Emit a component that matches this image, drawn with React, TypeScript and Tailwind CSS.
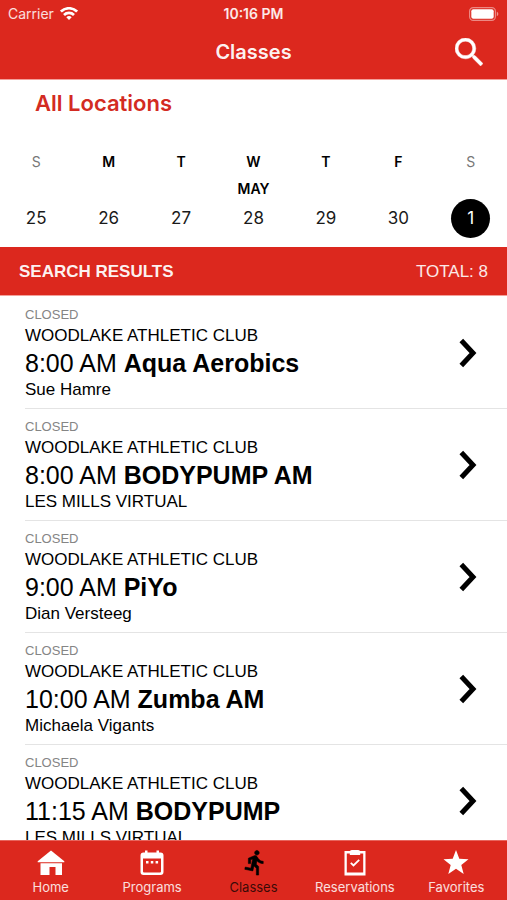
import type { ReactNode } from "react";

type Day = { letter: string; date: number; month?: string; weekend?: boolean; selected?: boolean };

const days: Day[] = [
  { letter: "S", date: 25, weekend: true },
  { letter: "M", date: 26 },
  { letter: "T", date: 27 },
  { letter: "W", date: 28, month: "MAY" },
  { letter: "T", date: 29 },
  { letter: "F", date: 30 },
  { letter: "S", date: 1, weekend: true, selected: true },
];

const club = "WOODLAKE ATHLETIC CLUB";

const classes = [
  { time: "8:00 AM", name: "Aqua Aerobics", teacher: "Sue Hamre" },
  { time: "8:00 AM", name: "BODYPUMP AM", teacher: "LES MILLS VIRTUAL" },
  { time: "9:00 AM", name: "PiYo", teacher: "Dian Versteeg" },
  { time: "10:00 AM", name: "Zumba AM", teacher: "Michaela Vigants" },
  { time: "11:15 AM", name: "BODYPUMP", teacher: "LES MILLS VIRTUAL" },
];

function Wifi() {
  return (
    <svg viewBox="0 0 18 13" className="h-[13px] w-[18px]" fill="none" stroke="white" strokeWidth="2.7" aria-hidden="true">
      <path d="M.9 4.600a11.500 11.500 0 0 1 16.200 0" />
      <path d="M4 8a7.100 7.100 0 0 1 10 0" />
      <path d="M9 13 6.300 10.300a3.900 3.900 0 0 1 5.400 0z" fill="white" stroke="none" />
    </svg>
  );
}

function Battery() {
  return (
    <svg viewBox="0 0 30 14" className="h-[14px] w-[30px]" aria-hidden="true">
      <rect x=".6" y=".6" width="25.8" height="12.8" rx="3.6" fill="none" stroke="white" strokeOpacity=".45" strokeWidth="1.2" />
      <rect x="2.3" y="2.3" width="22.4" height="9.4" rx="2" fill="white" />
      <path d="M27.8 4.8c2 .7 2 3.700 0 4.400z" fill="white" fillOpacity=".5" />
    </svg>
  );
}

function SearchIcon() {
  return (
    <svg viewBox="3 3 17.500 17.500" className="size-7" fill="currentColor" stroke="currentColor" strokeWidth=".3" aria-hidden="true">
      <path d="M15.500 14h-.79l-.28-.27A6.471 6.471 0 0 0 16 9.500 6.500 6.500 0 1 0 9.500 16c1.610 0 3.090-.59 4.230-1.570l.27.28v.79l5 4.990L20.490 19l-4.990-5zm-6 0C7.010 14 5 11.990 5 9.500S7.010 5 9.500 5 14 7.010 14 9.500 11.990 14 9.500 14z" />
    </svg>
  );
}

function TabIcon({ children }: { children: ReactNode }) {
  return (
    <svg viewBox="0 0 28 28" className="size-7" fill="currentColor" aria-hidden="true">
      {children}
    </svg>
  );
}

const tabs = [
  {
    label: "Home",
    icon: (
      <TabIcon>
        <path d="M14 1.500 27.300 12.300v1H.7v-1z" />
        <path d="M3.500 14.200h21.500V26h-6.500v-8h-6v8H3.500z" />
      </TabIcon>
    ),
  },
  {
    label: "Programs",
    icon: (
      <TabIcon>
        <path fillRule="evenodd" d="M5.500 3.500H7V1.500h2.500v2h9v-2H21v2h1.500a3 3 0 0 1 3 3V23a3 3 0 0 1-3 3h-17a3 3 0 0 1-3-3V6.500a3 3 0 0 1 3-3zM5 9.500V22.500a1 1 0 0 0 1 1h16a1 1 0 0 0 1-1V9.500z" />
        <path d="M8 12h2.500v2.500H8zM12.800 12h2.500v2.500h-2.500zM17.600 12h2.500v2.500h-2.500z" />
      </TabIcon>
    ),
  },
  {
    label: "Classes",
    active: true,
    icon: (
      <svg viewBox="-2.200 .2 24.500 24.500" className="size-7" fill="currentColor" stroke="currentColor" strokeWidth=".5" aria-hidden="true">
        <path d="M13.490 5.480c1.100 0 2-.9 2-2s-.9-2-2-2-2 .9-2 2 .9 2 2 2zm-3.600 13.900l1-4.400 2.100 2v6h2v-7.500l-2.100-2 .6-3c1.300 1.500 3.300 2.500 5.500 2.500v-2c-1.900 0-3.500-1-4.300-2.400l-1-1.600c-.4-.6-1-1-1.700-1-.3 0-.5.1-.8.1l-5.200 2.200v4.700h2v-3.400l1.800-.7-1.600 8.100-4.900-1-.4 2 7 1.400z" />
      </svg>
    ),
  },
  {
    label: "Reservations",
    icon: (
      <TabIcon>
        <path fillRule="evenodd" d="M3.500 2H9q.5-1 2-1h6q1.500 0 2 1h5.500v24.500h-21zM5.800 4.500V23.500h16.400V4.500h-3V6H8.800V4.500z" />
        <path d="m9.800 13.800 2.700 2.700 5.700-5.700" fill="none" stroke="currentColor" strokeWidth="1.800" />
      </TabIcon>
    ),
  },
  {
    label: "Favorites",
    icon: (
      <TabIcon>
        <path d="m14 1 3.300 8.800 9.200.4-7.200 5.800 2.400 9-7.700-5.200L6.300 25l2.400-9-7.200-5.800 9.200-.4z" />
      </TabIcon>
    ),
  },
];

export default function App() {
  return (
    <div className="flex h-screen flex-col bg-white font-['Liberation_Sans',Arial,sans-serif] text-black">
      <header className="border-b border-[#f3a09a] bg-[#dc281e] font-[Inter,sans-serif] text-white">
        <div className="grid h-[27px] grid-cols-3 items-center px-2">
          <div className="flex items-center gap-1.5 text-[14px] text-white/85">
            <span>Carrier</span>
            <Wifi />
          </div>
          <div className="text-center text-[14px] font-semibold text-white/90">10:16 PM</div>
          <div className="flex justify-end">
            <Battery />
          </div>
        </div>
        <div className="grid h-[52px] grid-cols-[1fr_auto_1fr] items-center px-6 pb-0.5">
          <h1 className="col-start-2 text-[20px] font-semibold text-white/95">Classes</h1>
          <button type="button" aria-label="Search" className="justify-self-end">
            <SearchIcon />
          </button>
        </div>
      </header>

      <section className="font-[Inter,sans-serif]">
        <button type="button" className="mt-[7px] ml-[35px] block h-8 text-[22px] leading-8 font-semibold text-[#d32b22]">
          All Locations
        </button>
        <div className="mt-[33px] grid grid-cols-7">
          {days.map((day, i) => (
            <button key={i} type="button" aria-pressed={!!day.selected} className="flex flex-col items-center">
              <span className={day.weekend ? "h-5 text-[14px] leading-5 text-[#777]" : "h-5 text-[14px] leading-5 font-semibold"}>
                {day.letter}
              </span>
              <span className="mt-[7px] h-5 text-[14px] leading-5 font-semibold">{day.month}</span>
              <span
                className={
                  day.selected
                    ? "flex size-[39px] items-center justify-center rounded-full bg-black text-[17px] text-white"
                    : "flex size-[39px] items-center justify-center text-[17px] text-[#1a1a1a]"
                }
              >
                {day.date}
              </span>
            </button>
          ))}
        </div>
      </section>

      <div className="mt-[9px] flex h-[49px] shrink-0 items-center justify-between border-b border-[#f3a09a] bg-[#dc281e] px-[19px] pt-0.5 text-[17px] text-white">
        <h2 className="font-bold text-white/95">SEARCH RESULTS</h2>
        <span className="text-white/90">TOTAL: 8</span>
      </div>

      <ul className="min-h-0 flex-1 overflow-y-auto pt-px [scrollbar-width:none]">
        {classes.map((item, i) => (
          <li key={i} className="pl-[25px]">
            <button type="button" className="flex h-28 w-full items-center justify-between border-b border-[#e4e4e4] pr-7 text-left">
              <span className="flex flex-col">
                <span className="text-[13px] leading-5 text-[#858585]">CLOSED</span>
                <span className="text-[17px] leading-[22px]">{club}</span>
                <span className="text-[25px] leading-8">
                  {item.time} <b>{item.name}</b>
                </span>
                <span className="text-[17px] leading-[22px]">{item.teacher}</span>
              </span>
              <svg viewBox="0 0 20 30" className="h-[30px] w-5" fill="none" stroke="currentColor" strokeWidth="5" aria-hidden="true">
                <path d="m2.300 2.500 11.700 12.500L2.300 27.500" />
              </svg>
            </button>
          </li>
        ))}
      </ul>

      <nav className="grid h-[60px] shrink-0 grid-cols-5 border-t border-[#e8655d] bg-[#dc281e] font-[Inter,sans-serif] text-[13px] text-white">
        {tabs.map((tab) => (
          <a
            key={tab.label}
            href={"#" + tab.label.toLowerCase()}
            aria-current={tab.active ? "page" : undefined}
            className={tab.active ? "flex flex-col items-center pt-2 text-black" : "flex flex-col items-center pt-2"}
          >
            {tab.icon}
            <span className={tab.active ? "leading-5 text-black/75" : "leading-5 text-white/85"}>{tab.label}</span>
          </a>
        ))}
      </nav>
    </div>
  );
}
